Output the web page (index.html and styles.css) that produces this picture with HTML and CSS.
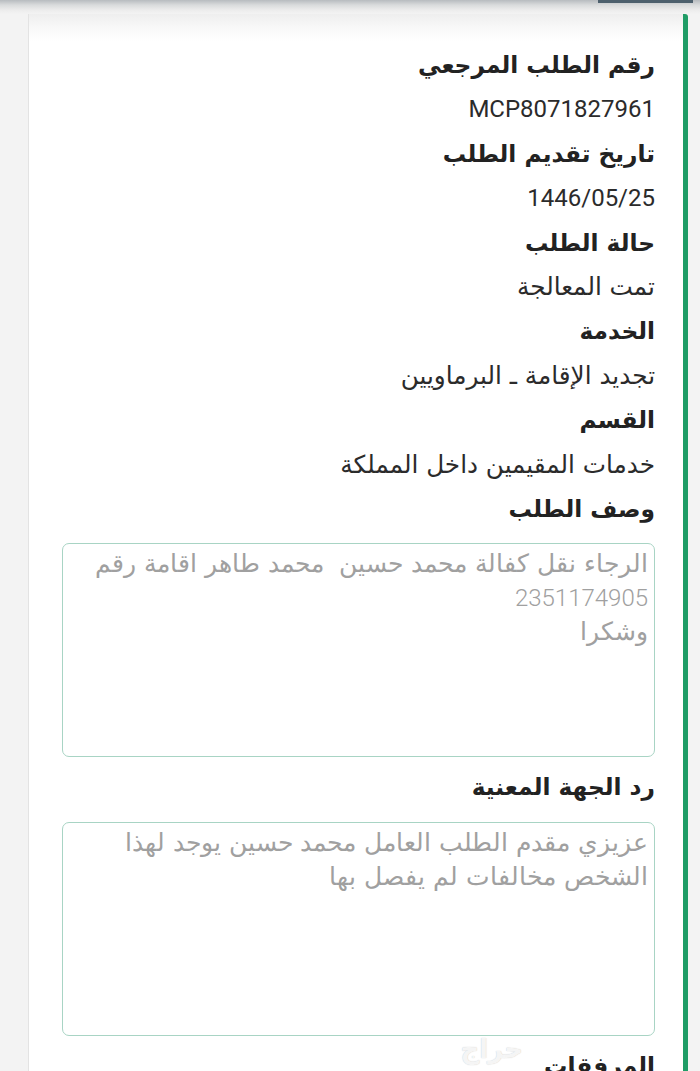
FILE: index.html
```html
<!DOCTYPE html>
<html lang="ar" dir="rtl">
<head>
<meta charset="utf-8">
<title>تفاصيل الطلب</title>
<link rel="stylesheet" href="styles.css">
</head>
<body>
<div class="topbar"><div class="tab"></div></div>
<div class="card">
  <div class="label">رقم الطلب المرجعي</div>
  <div class="value latin">MCP8071827961</div>
  <div class="label">تاريخ تقديم الطلب</div>
  <div class="value latin">1446/05/25</div>
  <div class="label">حالة الطلب</div>
  <div class="value">تمت المعالجة</div>
  <div class="label">الخدمة</div>
  <div class="value">تجديد الإقامة ـ البرماويين</div>
  <div class="label">القسم</div>
  <div class="value">خدمات المقيمين داخل المملكة</div>
  <div class="label">وصف الطلب</div>
  <div class="box">الرجاء نقل كفالة محمد حسين&nbsp;&nbsp;محمد طاهر اقامة رقم<br><span class="latin">2351174905</span><br>وشكرا</div>
  <div class="label gap">رد الجهة المعنية</div>
  <div class="box">عزيزي مقدم الطلب العامل محمد حسين يوجد لهذا<br>الشخص مخالفات لم يفصل بها</div>
  <div class="label gap2">المرفقات</div>
  <div class="mark">حراج</div>
</div>
</body>
</html>
```
FILE: styles.css
```css
html, body {
  margin: 0;
  padding: 0;
  height: 1071px;
  overflow: hidden;
}
body {
  background: #f3f3f3;
  font-family: "DejaVu Sans", sans-serif;
  direction: rtl;
  color: #222;
}
.topbar {
  height: 14px;
  background: linear-gradient(#b7bbbf 0, #d9dbdc 5px, #ececec 10px, #f3f3f3 14px);
  display: flex;
  padding-right: 7px;
}
.tab {
  width: 95px;
  height: 3px;
  background: #4d606d;
}
.card {
  position: relative;
  margin-left: 28px;
  margin-right: 12px;
  border-left: 1px solid #e3e3e3;
  border-right: 5px solid #1f9c66;
  border-top-right-radius: 3px;
  background: linear-gradient(#eeeeee 0, #f7f7f7 12px, #ffffff 28px);
  padding: 29px 28px 0 33px;
  height: 1100px;
}
.label {
  font-weight: bold;
  font-size: 23.3px;
  line-height: 44.4px;
  color: #222;
}
.value {
  font-size: 24.7px;
  line-height: 44.4px;
  color: #2b2b2b;
}
.latin,
.value.latin {
  font-family: Roboto, "DejaVu Sans", sans-serif;
  font-size: 24px;
}
.box {
  margin-top: 12px;
  height: 206px;
  border: 1.5px solid #a8d4c4;
  border-radius: 7px;
  padding: 3px 6px 3px 6px;
  font-size: 24.8px;
  font-weight: 300;
  line-height: 34px;
  color: #a0a0a0;
}
.box .latin {
  font-weight: 300;
}
.label.gap {
  margin-top: 8px;
  margin-bottom: 8px;
}
.label.gap2 {
  margin-top: 8px;
}
.mark {
  position: absolute;
  right: 160px;
  top: 1020px;
  font-size: 26px;
  font-weight: bold;
  color: rgba(255,255,255,0.85);
  text-shadow: 0 0 1px rgba(0,0,0,0.25);
}
```
